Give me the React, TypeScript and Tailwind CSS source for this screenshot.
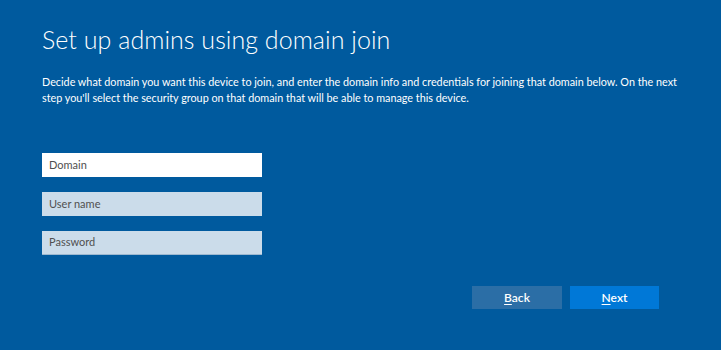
import React from "react";

export default function App() {
  return (
    <div
      className="w-[721px] h-[350px] bg-[#005a9e] text-white flex flex-col pl-[42px] pr-[62px] overflow-hidden"
      style={{ fontFamily: '"Segoe UI", Lato, "Noto Sans", sans-serif' }}
    >
      <h1
        className="mt-[24px] text-[25px] leading-[30px] font-light tracking-[0.05px]"
        style={{ fontFamily: '"Segoe UI Light", Lato, "Noto Sans", sans-serif' }}
      >
        Set up admins using domain join
      </h1>
      <p className="mt-[20px] text-[10.8px] leading-[16px] whitespace-nowrap">
        Decide what domain you want this device to join, and enter the domain info and credentials for joining that domain below. On the next
        <br />
        step you'll select the security group on that domain that will be able to manage this device.
      </p>
      <div className="mt-[47px] flex flex-col gap-[15px] w-[220px]">
        <div className="h-[24px] bg-white flex items-center px-[7px] text-[11px] text-[#505050]">Domain</div>
        <div className="h-[24px] bg-[#cbdcea] flex items-center px-[7px] text-[11px] text-[#505050]">User name</div>
        <div className="h-[24px] bg-[#cbdcea] flex items-center px-[7px] text-[11px] text-[#505050] border-b border-[#9db8d0]">Password</div>
      </div>
      <div className="mt-[31px] flex justify-end gap-[8px]">
        <div className="w-[90px] h-[23px] bg-[#2b6ea6] flex items-center justify-center text-[12px] font-semibold">
          <span><span className="underline underline-offset-2">B</span>ack</span>
        </div>
        <div className="w-[89px] h-[23px] bg-[#0078d7] flex items-center justify-center text-[12px] font-semibold">
          <span><span className="underline underline-offset-2">N</span>ext</span>
        </div>
      </div>
    </div>
  );
}
